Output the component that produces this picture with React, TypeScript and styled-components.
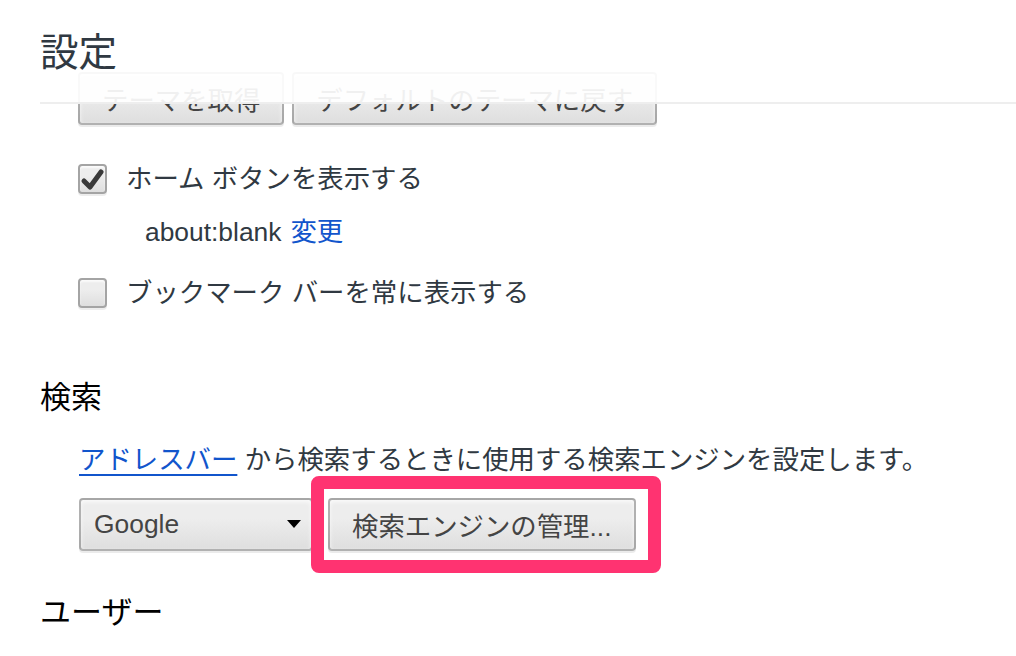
import React from "react";
import styled, { createGlobalStyle } from "styled-components";

const GlobalStyle = createGlobalStyle`
  html, body {
    margin: 0;
    padding: 0;
    background: #ffffff;
  }
  body {
    font-family: "Liberation Sans", "Noto Sans CJK JP", sans-serif;
    color: #303942;
    overflow: hidden;
  }
`;

const Page = styled.div`
  position: relative;
  width: 1016px;
  height: 656px;
  overflow: hidden;
  padding: 72px 0 0 40px;
  box-sizing: border-box;
`;

const Header = styled.header`
  position: absolute;
  top: 0;
  left: 0;
  right: 0;
  padding-left: 40px;
  background: rgba(255, 255, 255, 0.92);
  z-index: 2;
`;

const HeaderBar = styled.div`
  height: 102px;
  border-bottom: 2px solid #eeeeee;
  box-sizing: content-box;
`;

const Title = styled.h1`
  margin: 0;
  padding-top: 32px;
  font-size: 38.5px;
  line-height: 42px;
  font-weight: normal;
  color: #303942;
`;

const Indent = styled.div`
  padding-left: 38px;
`;

const ButtonRow = styled.div`
  display: flex;
  gap: 8px;
`;

const Button = styled.button`
  height: 53px;
  padding: 0 22px;
  font-family: inherit;
  font-size: 26.4px;
  color: #444444;
  border: 2px solid rgba(0, 0, 0, 0.25);
  border-radius: 4px;
  background: linear-gradient(#ededed, #ededed 38%, #dedede);
  box-shadow: 0 2px 0 rgba(0, 0, 0, 0.08), inset 0 2px 4px rgba(255, 255, 255, 0.75);
  box-sizing: border-box;
  white-space: nowrap;
`;

const CheckRow = styled.label<{ $top: number }>`
  display: flex;
  align-items: center;
  gap: 19px;
  margin-top: ${(p) => p.$top}px;
  height: 30px;
  font-size: 26.4px;
  line-height: 30px;
`;

const Box = styled.span`
  display: flex;
  align-items: center;
  justify-content: center;
  width: 29px;
  height: 30px;
  box-sizing: border-box;
  border: 2px solid #a4a4a4;
  border-radius: 4px;
  background: linear-gradient(#ededed, #ededed 38%, #dedede);
  box-shadow: 0 2px 0 rgba(0, 0, 0, 0.07), inset 0 2px 2px rgba(255, 255, 255, 0.75);
`;

const SubRow = styled.div`
  margin-top: 23px;
  padding-left: 67px;
  height: 30px;
  line-height: 30px;
  font-size: 26.4px;
  display: flex;
  gap: 9px;
`;

const Link = styled.a<{ $underline?: boolean }>`
  color: #1155cc;
  text-decoration: ${(p) => (p.$underline ? "underline" : "none")};
  text-decoration-thickness: 2px;
  text-underline-offset: 5px;
  cursor: pointer;
`;

const SectionTitle = styled.h3<{ $top: number }>`
  margin: ${(p) => p.$top}px 0 0 0;
  font-size: 31px;
  line-height: 40px;
  font-weight: normal;
  color: #000000;
`;

const Description = styled.p`
  margin: 24px 0 0 39px;
  font-size: 26.4px;
  line-height: 36px;
  white-space: nowrap;
`;

const ControlsRow = styled.div`
  display: flex;
  gap: 15px;
  margin: 20px 0 0 39px;
  align-items: center;
`;

const Select = styled.div`
  width: 234px;
  height: 53px;
  box-sizing: border-box;
  padding: 0 10px 0 13px;
  display: flex;
  align-items: center;
  justify-content: space-between;
  font-size: 26.4px;
  color: #444444;
  border: 2px solid rgba(0, 0, 0, 0.25);
  border-radius: 4px;
  background: linear-gradient(#ededed, #ededed 38%, #dedede);
  box-shadow: 0 2px 0 rgba(0, 0, 0, 0.08), inset 0 2px 4px rgba(255, 255, 255, 0.75);
`;

const Arrow = styled.span`
  width: 0;
  height: 0;
  border-left: 7px solid transparent;
  border-right: 7px solid transparent;
  border-top: 8px solid #000;
  margin-bottom: 2px;
`;

const Highlighted = styled.div`
  position: relative;
`;

const HighlightFrame = styled.div`
  position: absolute;
  left: -17px;
  top: -22px;
  right: -25px;
  bottom: -22px;
  border: 13px solid #ff3371;
  border-radius: 8px;
  pointer-events: none;
`;

const CheckMark = () => (
  <svg width="25" height="25" viewBox="0 0 25 25">
    <path d="M4 14 L10 20 L21 5" fill="none" stroke="#3a3a3a" strokeWidth="5" strokeLinecap="round" strokeLinejoin="round" />
  </svg>
);

export default function App() {
  return (
    <>
      <GlobalStyle />
      <Page>
        <Header>
          <HeaderBar>
            <Title>設定</Title>
          </HeaderBar>
        </Header>

        <Indent>
          <ButtonRow>
            <Button>テーマを取得</Button>
            <Button>デフォルトのテーマに戻す</Button>
          </ButtonRow>

          <CheckRow $top={39}>
            <Box>
              <CheckMark />
            </Box>
            <span>ホーム ボタンを表示する</span>
          </CheckRow>

          <SubRow>
            <span>about:blank</span>
            <Link>変更</Link>
          </SubRow>

          <CheckRow $top={31}>
            <Box />
            <span>ブックマーク バーを常に表示する</span>
          </CheckRow>
        </Indent>

        <SectionTitle $top={70}>検索</SectionTitle>
        <Description>
          <Link $underline>アドレスバー</Link> から検索するときに使用する検索エンジンを設定します。
        </Description>
        <ControlsRow>
          <Select>
            <span>Google</span>
            <Arrow />
          </Select>
          <Highlighted>
            <Button>検索エンジンの管理...</Button>
            <HighlightFrame />
          </Highlighted>
        </ControlsRow>

        <SectionTitle $top={42}>ユーザー</SectionTitle>
      </Page>
    </>
  );
}
